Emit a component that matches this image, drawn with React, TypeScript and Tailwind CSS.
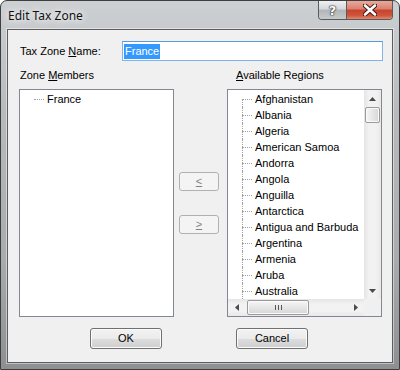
import React from 'react';

const REGIONS = [
  'Afghanistan',
  'Albania',
  'Algeria',
  'American Samoa',
  'Andorra',
  'Angola',
  'Anguilla',
  'Antarctica',
  'Antigua and Barbuda',
  'Argentina',
  'Armenia',
  'Aruba',
  'Australia',
];

const ui = "font-['Liberation_Sans',Arial,sans-serif] text-[11px] text-black";

const Arrow: React.FC<{ dir: 'up' | 'down' | 'left' | 'right' }> = ({ dir }) => {
  const pts = {
    up: '0,4 3.5,0 7,4',
    down: '0,0 7,0 3.5,4',
    left: '4,0 4,7 0,3.5',
    right: '0,0 0,7 4,3.5',
  }[dir];
  const vert = dir === 'up' || dir === 'down';
  return (
    <svg width={vert ? 7 : 4} height={vert ? 4 : 7} viewBox={vert ? '0 0 7 4' : '0 0 4 7'}>
      <polygon points={pts} fill="#4a4a4a" />
    </svg>
  );
};

const TreeRow: React.FC<{ label: string; first?: boolean; trunk?: boolean }> = ({ label, first, trunk }) => (
  <div className="flex h-[16px] shrink-0">
    <div className="ml-[14px] w-[10px] flex flex-col">
      <div className={trunk && !first ? 'h-[8px] border-l border-dotted border-[#a0a0a0]' : 'h-[8px]'} />
      <div
        className={
          trunk
            ? 'flex-1 border-l border-t border-dotted border-[#a0a0a0]'
            : 'flex-1 border-t border-dotted border-[#a0a0a0]'
        }
      />
    </div>
    <span className="ml-[3px] leading-[16px] whitespace-nowrap">{label}</span>
  </div>
);

const PushButton: React.FC<{ children: React.ReactNode }> = ({ children }) => (
  <div className="w-[72px] h-[21px] rounded-[3px] border border-[#707070] bg-[linear-gradient(#f2f2f2_0%,#ebebeb_50%,#dddddd_50%,#cfcfcf_100%)] shadow-[inset_0_0_0_1px_#fbfbfb] flex items-center justify-center">
    {children}
  </div>
);

const MoveButton: React.FC<{ children: React.ReactNode }> = ({ children }) => (
  <div className="w-[40px] h-[19px] rounded-[3px] border border-[#adb2b5] bg-[#f4f4f4] flex items-center justify-center text-[#838383] underline">
    {children}
  </div>
);

const App: React.FC = () => {
  return (
    <div className="w-[400px] h-[370px] flex flex-col rounded-t-[7px] border border-[#3e3e3e] bg-[linear-gradient(#cdd0d3_0%,#b8babc_30%,#a9abad_70%,#8d8f91_100%)]">
      {/* caption */}
      <div className="h-[28px] flex items-start justify-between pl-[7px] pr-[6px]">
        <span className="mt-[6px] font-['Noto_Sans','Open_Sans',sans-serif] text-[12px] text-[#111] [text-shadow:0_0_6px_#ffffff,0_0_10px_#ffffff]">
          Edit Tax Zone
        </span>
        <div className="flex h-[19px] rounded-b-[4px] border border-t-0 border-[#5a5a5a] overflow-hidden">
          <div className="w-[28px] h-full flex items-center justify-center border-r border-[#5a5a5a] bg-[linear-gradient(#eef0f2_0%,#d4d8db_45%,#b1b5b9_50%,#c6cacd_100%)]">
            <span className="font-['DejaVu_Sans',sans-serif] font-bold text-[13px] leading-none text-white [text-shadow:0_0_1px_#222,0_0_1px_#222,0_0_2px_#333]">
              ?
            </span>
          </div>
          <div className="w-[45px] h-full flex items-center justify-center bg-[linear-gradient(#e9a99c_0%,#d9806f_45%,#c7432c_50%,#d1533c_80%,#e08a6e_100%)]">
            <svg width="14" height="12" viewBox="0 0 14 12">
              <path d="M2 1.5 L12 10.5 M12 1.5 L2 10.5" stroke="#3a1a14" strokeWidth="4.5" strokeLinecap="round" />
              <path d="M2 1.5 L12 10.5 M12 1.5 L2 10.5" stroke="#ffffff" strokeWidth="2.6" strokeLinecap="round" />
            </svg>
          </div>
        </div>
      </div>

      {/* client area */}
      <div className={`mx-[6px] h-[334px] border border-[#5d5d5d] bg-[#f0f0f0] shadow-[0_0_0_1px_rgba(255,255,255,0.45)] flex flex-col ${ui}`}>
        <div className="mt-[11px] h-[20px] flex items-center">
          <span className="ml-[12px] w-[102px]">
            Tax Zone <span className="underline">N</span>ame:
          </span>
          <div className="w-[261px] h-[20px] border border-[#7eb4ea] border-t-[#5a9ad6] bg-white flex items-center pl-[1px]">
            <span className="bg-[#3399ff] text-white px-[1px] leading-[15px]">France</span>
          </div>
        </div>

        <div className="mt-[7px] h-[14px] flex items-center">
          <span className="ml-[12px] w-[216px]">
            Zone <span className="underline">M</span>embers
          </span>
          <span>
            <span className="underline">A</span>vailable Regions
          </span>
        </div>

        <div className="mt-[7px] flex ml-[11px]">
          <div className="w-[155px] h-[228px] border border-[#828790] bg-white pt-[1px] flex flex-col">
            <TreeRow label="France" />
          </div>

          <div className="w-[53px] pl-[5px] pt-[83px] flex flex-col gap-[24px]">
            <MoveButton>&lt;</MoveButton>
            <MoveButton>&gt;</MoveButton>
          </div>

          <div className="w-[155px] h-[228px] border border-[#828790] bg-white flex flex-col">
            <div className="flex-1 flex min-h-0">
              <div className="flex-1 pt-[1px] overflow-hidden flex flex-col">
                {REGIONS.map((r, i) => (
                  <TreeRow key={r} label={r} first={i === 0} trunk />
                ))}
              </div>
              <div className="w-[17px] flex flex-col bg-[linear-gradient(90deg,#e5e5e5,#f2f2f2_30%,#f2f2f2_70%,#e8e8e8)]">
                <div className="h-[17px] flex items-center justify-center">
                  <Arrow dir="up" />
                </div>
                <div className="mx-[1px] h-[16px] rounded-[2px] border border-[#9a9a9a] bg-[linear-gradient(90deg,#f6f6f6,#e6e6e6_50%,#d6d6d6)] shadow-[inset_0_0_0_1px_#fafafa]" />
                <div className="flex-1" />
                <div className="h-[17px] flex items-center justify-center">
                  <Arrow dir="down" />
                </div>
              </div>
            </div>
            <div className="h-[17px] flex">
              <div className="flex-1 flex items-center bg-[linear-gradient(#e5e5e5,#f2f2f2_30%,#f2f2f2_70%,#e8e8e8)]">
                <div className="w-[17px] h-full flex items-center justify-center">
                  <Arrow dir="left" />
                </div>
                <div className="ml-[2px] w-[62px] h-[15px] rounded-[2px] border border-[#9a9a9a] bg-[linear-gradient(#f6f6f6,#e6e6e6_50%,#d6d6d6)] shadow-[inset_0_0_0_1px_#fafafa] flex items-center justify-center gap-[2px]">
                  <div className="w-[1px] h-[5px] bg-[#555]" />
                  <div className="w-[1px] h-[5px] bg-[#555]" />
                  <div className="w-[1px] h-[5px] bg-[#555]" />
                </div>
                <div className="flex-1" />
                <div className="w-[17px] h-full flex items-center justify-center">
                  <Arrow dir="right" />
                </div>
              </div>
              <div className="w-[17px] bg-[#f0f0f0]" />
            </div>
          </div>
        </div>

        <div className="mt-[11px] flex">
          <div className="ml-[82px]">
            <PushButton>OK</PushButton>
          </div>
          <div className="ml-[74px]">
            <PushButton>Cancel</PushButton>
          </div>
        </div>
      </div>
    </div>
  );
};

export default App;
